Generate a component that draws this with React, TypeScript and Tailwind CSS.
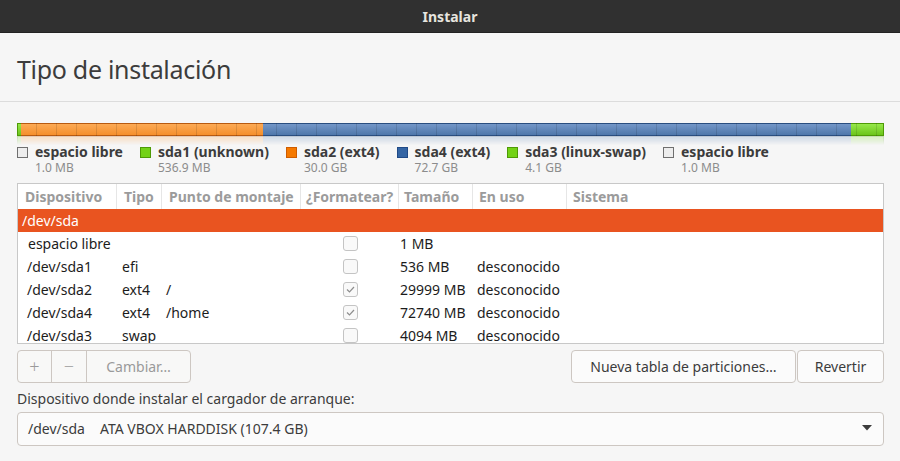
import React from "react"

const legend = [
  { name: "espacio libre", size: "1.0 MB", box: "bg-[#ededed] border-[#6f6f6f]" },
  { name: "sda1 (unknown)", size: "536.9 MB", box: "bg-[#73d216] border-[#4e9a06]" },
  { name: "sda2 (ext4)", size: "30.0 GB", box: "bg-[#f57900] border-[#ce5c00]" },
  { name: "sda4 (ext4)", size: "72.7 GB", box: "bg-[#3465a4] border-[#204a87]" },
  { name: "sda3 (linux-swap)", size: "4.1 GB", box: "bg-[#73d216] border-[#4e9a06]" },
  { name: "espacio libre", size: "1.0 MB", box: "bg-[#ededed] border-[#6f6f6f]" },
]

const rows = [
  { dev: "espacio libre", type: "", mount: "", fmt: false, size: "1 MB", use: "", indent: "pl-[10px]" },
  { dev: "/dev/sda1", type: "efi", mount: "", fmt: false, size: "536 MB", use: "desconocido", indent: "pl-[9px]" },
  { dev: "/dev/sda2", type: "ext4", mount: "/", fmt: true, size: "29999 MB", use: "desconocido", indent: "pl-[9px]" },
  { dev: "/dev/sda4", type: "ext4", mount: "/home", fmt: true, size: "72740 MB", use: "desconocido", indent: "pl-[9px]" },
  { dev: "/dev/sda3", type: "swap", mount: "", fmt: false, size: "4094 MB", use: "desconocido", indent: "pl-[9px]" },
]

const cols = "grid grid-cols-[99px_45px_139px_98px_74px_94px_1fr]"

const Segments = () => (
  <div className="flex h-full">
    <div className="w-[4px] border-y border-l border-[#4e9a06] bg-[linear-gradient(#96e84a,#6cc51a)]" />
    <div className="w-[242px] border-y border-[#b85a10] bg-[linear-gradient(#fcaa55,#f58f2c)]" />
    <div className="flex-1 border-y border-[#2a4e80] bg-[linear-gradient(#7497c8,#4f77ab)]" />
    <div className="w-[33px] border-y border-r border-[#4e9a06] bg-[linear-gradient(#96e84a,#6cc51a)]" />
  </div>
)

const Check = ({ on }: { on: boolean }) => (
  <div className="w-[15px] h-[15px] rounded-[3px] border border-[#c4c4c4] bg-[#f9f9f9] flex items-center justify-center">
    {on && (
      <svg width="11" height="11" viewBox="0 0 11 11">
        <path d="M2 5.5 L4.5 8 L9 3" fill="none" stroke="#8e8e8e" strokeWidth="1.2" />
      </svg>
    )}
  </div>
)

export default function App() {
  return (
    <div className="w-[900px] h-[461px] overflow-hidden bg-[#f6f6f6] font-['Noto_Sans',sans-serif] text-[#3c3c3c]">
      <div className="h-[33px] bg-[#303030] border-b border-[#232323] flex items-center justify-center">
        <span className="text-[14px] font-bold text-[#e6e4df]">Instalar</span>
      </div>

      <div className="h-[69px] pt-[6px] px-[17px] flex items-center border-b border-[#dcdcdc]">
        <h1 className="text-[25px] text-[#3c3c3c] tracking-[-0.3px]">Tipo de instalación</h1>
      </div>

      <div className="pl-[17px] pr-[16px]">
        <div className="relative mt-[21px] h-[13px]">
          <Segments />
          <div className="absolute inset-0 bg-[repeating-linear-gradient(to_right,transparent_0_19px,rgba(0,0,0,0.12)_19px_20px)]" />
        </div>
        <div className="h-[9px] opacity-30 [mask-image:linear-gradient(to_bottom,black,transparent)]">
          <Segments />
        </div>

        <div className="flex gap-[17px] -mt-[1px]">
          {legend.map((l, i) => (
            <div key={i} className="flex gap-[7px]">
              <div className={`mt-[3px] w-[11px] h-[11px] border ${l.box}`} />
              <div className="flex flex-col">
                <span className="text-[14px] font-bold leading-[16px] text-[#3c3c3c]">{l.name}</span>
                <span className="text-[12px] leading-[15px] text-[#8c8c8c]">{l.size}</span>
              </div>
            </div>
          ))}
        </div>

        <div className="mt-[8px] h-[161px] border border-[#c8c8c8] bg-white overflow-hidden text-[14px] text-[#1c1c1c]">
          <div className={`${cols} h-[25px] text-[14px] font-bold text-[#9b9b9b]`}>
            <div className="pl-[7px] flex items-center border-r border-[#e6e6e6]">Dispositivo</div>
            <div className="pl-[7px] flex items-center border-r border-[#e6e6e6]">Tipo</div>
            <div className="pl-[7px] flex items-center border-r border-[#e6e6e6]">Punto de montaje</div>
            <div className="pl-[5px] flex items-center border-r border-[#e6e6e6]">¿Formatear?</div>
            <div className="pl-[5px] flex items-center border-r border-[#e6e6e6]">Tamaño</div>
            <div className="pl-[6px] flex items-center border-r border-[#e6e6e6]">En uso</div>
            <div className="pl-[6px] flex items-center">Sistema</div>
          </div>
          <div className="h-[23px] bg-[#e95420] text-white flex items-center pl-[4px]">/dev/sda</div>
          {rows.map((r, i) => (
            <div key={i} className={`${cols} h-[23px] items-center`}>
              <div className={r.indent}>{r.dev}</div>
              <div className="pl-[5px]">{r.type}</div>
              <div className="pl-[4px]">{r.mount}</div>
              <div className="flex justify-center">
                <Check on={r.fmt} />
              </div>
              <div className="pl-[1px]">{r.size}</div>
              <div className="pl-[4px]">{r.use}</div>
              <div />
            </div>
          ))}
        </div>

        <div className="mt-[6px] flex justify-between">
          <div className="flex h-[33px] rounded-[4px] border border-[#cdc7c2] bg-[#f8f8f7] text-[#9a9a9a] text-[14px]">
            <div className="w-[34px] flex items-center justify-center border-r border-[#cdc7c2] text-[18px] font-light">+</div>
            <div className="w-[35px] flex items-center justify-center border-r border-[#cdc7c2] text-[18px] font-light">−</div>
            <div className="w-[103px] flex items-center justify-center">Cambiar…</div>
          </div>
          <div className="flex gap-[1px]">
            <div className="h-[33px] w-[225px] rounded-[4px] border border-[#cdc7c2] bg-[#fbfbfb] flex items-center justify-center text-[14px]">
              Nueva tabla de particiones…
            </div>
            <div className="h-[33px] w-[87px] rounded-[4px] border border-[#cdc7c2] bg-[#fbfbfb] flex items-center justify-center text-[14px]">
              Revertir
            </div>
          </div>
        </div>

        <div className="mt-[7px] text-[14px] leading-[17px] text-[#3c3c3c]">
          Dispositivo donde instalar el cargador de arranque:
        </div>

        <div className="mt-[5px] h-[34px] rounded-[4px] border border-[#cdc7c2] bg-[#fbfbfb] flex items-center pl-[10px] pr-[11px] pb-[2px] text-[14px] text-[#3c3c3c]">
          <span className="w-[72px]">/dev/sda</span>
          <span className="flex-1">ATA VBOX HARDDISK (107.4 GB)</span>
          <svg width="10" height="6" viewBox="0 0 10 6">
            <path d="M0 0 L10 0 L5 5.5 Z" fill="#3c3c3c" />
          </svg>
        </div>
      </div>
    </div>
  )
}
